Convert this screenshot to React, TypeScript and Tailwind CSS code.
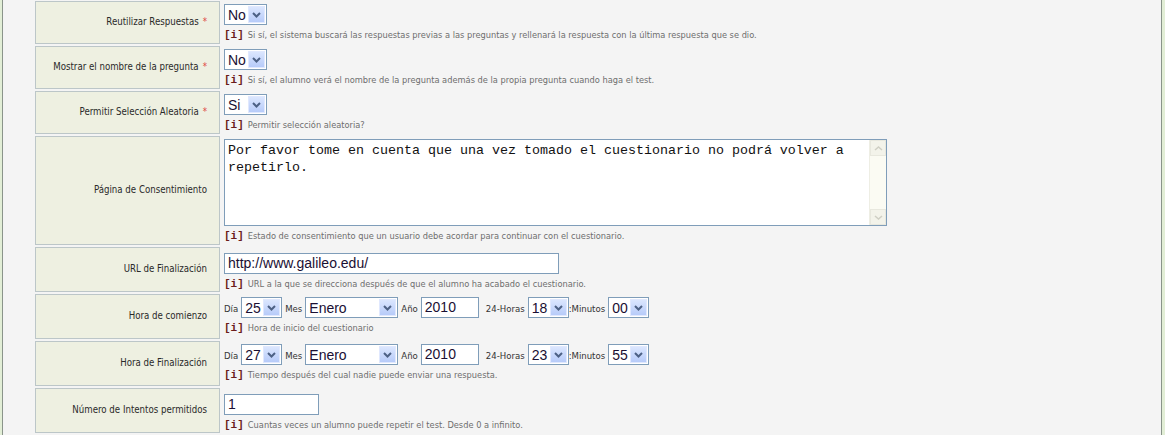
import React from "react"

const label = "font-['DejaVu_Sans_Condensed','Liberation_Sans',sans-serif]"

const Chevron = () => (
    <svg width="9" height="6" viewBox="0 0 9 6">
        <path d="M1 1 L4.5 4.5 L8 1" fill="none" stroke="#4d6185" strokeWidth="2" />
    </svg>
)

const Select = ({ value, w }: { value: string; w: string }) => (
    <div className={`${w} h-[21px] shrink-0 border border-[#7f9db9] bg-white flex items-center justify-between`}>
        <span className="pl-[3px] text-[14px] leading-none text-[#1a0f33] font-['Liberation_Sans',sans-serif]">{value}</span>
        <div className="w-[17px] h-[17px] mr-[1px] border border-[#e0e8fe] bg-gradient-to-b from-[#dbe6fe] to-[#b7cbf9] flex items-center justify-center">
            <Chevron />
        </div>
    </div>
)

const Input = ({ value, w }: { value: string; w: string }) => (
    <input
        readOnly
        defaultValue={value}
        className={`${w} h-[21px] shrink-0 border border-[#7f9db9] bg-white px-[3px] text-[14px] text-[#1a0f33] font-['Liberation_Sans',sans-serif] outline-none`}
    />
)

const Info = ({ text }: { text: string }) => (
    <div className="flex items-center gap-[4px] mt-[4px] h-[12px] whitespace-nowrap">
        <span className="text-[11px] font-bold leading-none text-[#6b1c1c] font-['Liberation_Mono',monospace]">[i]</span>
        <span className={`text-[9.2px] leading-none text-[#6e6e6e] ${label}`}>{text}</span>
    </div>
)

const Small = ({ t, cls = "" }: { t: string; cls?: string }) => (
    <span className={`text-[9.5px] text-[#333] self-end mb-[2px] whitespace-nowrap ${label} ${cls}`}>{t}</span>
)

const Row = ({ name, req, h, children }: { name: string; req?: boolean; h: string; children: React.ReactNode }) => (
    <div className={`flex ${h}`}>
        <div className={`w-[185px] shrink-0 border border-[#bcc6c8] bg-[#eef0e1] flex items-center justify-end pr-[12px] text-[9.6px] whitespace-nowrap text-[#2a2a2a] ${label}`}>
            {name}
            {req && <span className="text-[#e04848] ml-[4px]">*</span>}
        </div>
        <div className="pl-[4px] pt-[3px]">{children}</div>
    </div>
)

const Fecha = ({ dia, hora, min }: { dia: string; hora: string; min: string }) => (
    <div className="flex items-center gap-[3px] h-[21px]">
        <Small t="Día" />
        <Select value={dia} w="w-[41px]" />
        <Small t="Mes" />
        <Select value="Enero" w="w-[93px]" />
        <Small t="Año" />
        <Input value="2010" w="w-[58px]" />
        <Small t="24-Horas" cls="ml-[4px]" />
        <Select value={hora} w="w-[41px]" />
        <Small t=":Minutos" cls="-ml-[3px]" />
        <Select value={min} w="w-[41px]" />
    </div>
)

export default function App() {
    return (
        <div className="w-[1165px] h-[435px] flex bg-[#f4f4f4] overflow-hidden">
            <div className="w-[3px] shrink-0 bg-[#e2eed6] border-r border-[#8a948a]" />
            <div className="flex-1 pl-[32px] pt-[1px] flex flex-col gap-[2px]">
                <Row name="Reutilizar Respuestas" req h="h-[43px]">
                    <Select value="No" w="w-[43px]" />
                    <Info text="Si sí, el sistema buscará las respuestas previas a las preguntas y rellenará la respuesta con la última respuesta que se dio." />
                </Row>
                <Row name="Mostrar el nombre de la pregunta" req h="h-[43px]">
                    <Select value="No" w="w-[43px]" />
                    <Info text="Si sí, el alumno verá el nombre de la pregunta además de la propia pregunta cuando haga el test." />
                </Row>
                <Row name="Permitir Selección Aleatoria" req h="h-[43px]">
                    <Select value="Si" w="w-[43px]" />
                    <Info text="Permitir selección aleatoria?" />
                </Row>
                <Row name="Página de Consentimiento" h="h-[109px]">
                    <div className="w-[663px] h-[87px] border border-[#7f9db9] bg-white flex">
                        <div className="flex-1 pl-[3px] pt-[2px] text-[13.33px] leading-[17px] text-[#111] font-['Liberation_Mono',monospace]">
                            Por favor tome en cuenta que una vez tomado el cuestionario no podrá volver a repetirlo.
                        </div>
                        <div className="w-[17px] bg-[#fbfbf3] border-l border-[#eeeee4] flex flex-col justify-between">
                            <div className="h-[16px] bg-[#f3f3ea] border border-[#e8e8de] flex items-center justify-center">
                                <svg width="9" height="5" viewBox="0 0 9 5"><path d="M1 4 L4.5 1 L8 4" fill="none" stroke="#cfcfc4" strokeWidth="1.5" /></svg>
                            </div>
                            <div className="h-[16px] bg-[#f3f3ea] border border-[#e8e8de] flex items-center justify-center">
                                <svg width="9" height="5" viewBox="0 0 9 5"><path d="M1 1 L4.5 4 L8 1" fill="none" stroke="#cfcfc4" strokeWidth="1.5" /></svg>
                            </div>
                        </div>
                    </div>
                    <Info text="Estado de consentimiento que un usuario debe acordar para continuar con el cuestionario." />
                </Row>
                <Row name="URL de Finalización" h="h-[45px]">
                    <Input value="http://www.galileo.edu/" w="w-[335px]" />
                    <Info text="URL a la que se direcciona después de que el alumno ha acabado el cuestionario." />
                </Row>
                <Row name="Hora de comienzo" h="h-[45px]">
                    <Fecha dia="25" hora="18" min="00" />
                    <Info text="Hora de inicio del cuestionario" />
                </Row>
                <Row name="Hora de Finalización" h="h-[45px]">
                    <Fecha dia="27" hora="23" min="55" />
                    <Info text="Tiempo después del cual nadie puede enviar una respuesta." />
                </Row>
                <Row name="Número de Intentos permitidos" h="h-[45px]">
                    <Input value="1" w="w-[95px]" />
                    <Info text="Cuantas veces un alumno puede repetir el test. Desde 0 a infinito." />
                </Row>
            </div>
            <div className="w-[4px] shrink-0 bg-[#e2eed6] border-l border-[#8a948a]" />
        </div>
    )
}
